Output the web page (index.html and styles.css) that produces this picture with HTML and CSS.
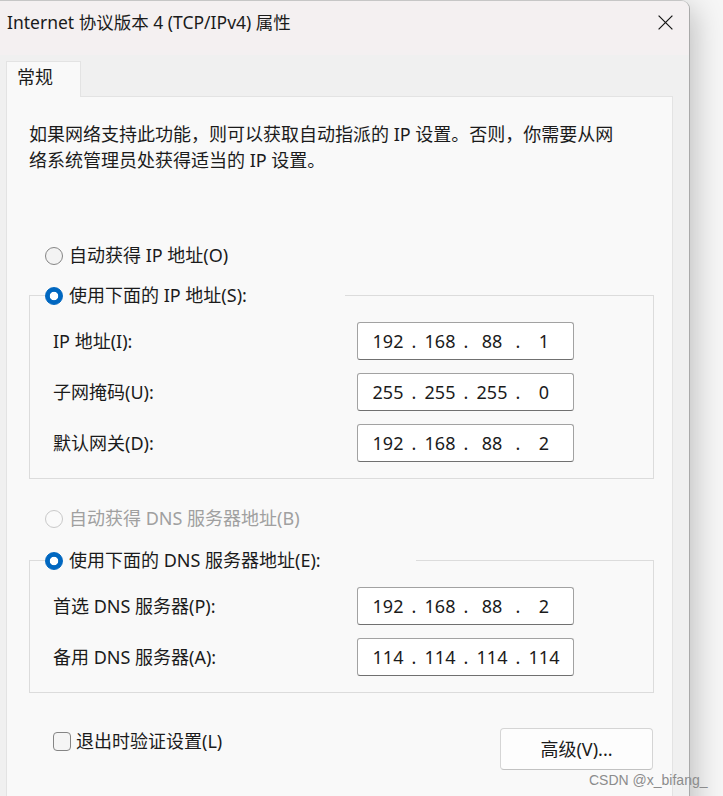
FILE: index.html
```html
<!DOCTYPE html>
<html lang="zh-CN">
<head>
<meta charset="utf-8">
<title>Internet 协议版本 4 (TCP/IPv4) 属性</title>
<link rel="stylesheet" href="styles.css">
</head>
<body>
<div class="window">
  <div class="titlebar">
    <span class="title">Internet 协议版本 4 (TCP/IPv4) 属性</span>
    <svg class="close" viewBox="0 0 15 15" aria-label="关闭"><path d="M0.6 0.6 L14.4 14.4 M14.4 0.6 L0.6 14.4" stroke="#1a1a1a" stroke-width="1.25" fill="none"/></svg>
  </div>
  <div class="content">
    <div class="tab">常规</div>
    <div class="panel">
      <p class="intro">如果网络支持此功能，则可以获取自动指派的 IP 设置。否则，你需要从网<br>络系统管理员处获得适当的 IP 设置。</p>

      <div class="radio-row r1"><span class="radio"></span><span>自动获得 IP 地址(O)</span></div>

      <fieldset class="group g1">
        <legend class="radio-row"><span class="radio checked"></span><span>使用下面的 IP 地址(S):</span></legend>
        <div class="fields">
          <label>IP 地址(I):</label>
          <div class="ip"><span class="oct">192</span><span class="dot">.</span><span class="oct">168</span><span class="dot">.</span><span class="oct">88</span><span class="dot">.</span><span class="oct">1</span></div>
          <label>子网掩码(U):</label>
          <div class="ip"><span class="oct">255</span><span class="dot">.</span><span class="oct">255</span><span class="dot">.</span><span class="oct">255</span><span class="dot">.</span><span class="oct">0</span></div>
          <label>默认网关(D):</label>
          <div class="ip"><span class="oct">192</span><span class="dot">.</span><span class="oct">168</span><span class="dot">.</span><span class="oct">88</span><span class="dot">.</span><span class="oct">2</span></div>
        </div>
      </fieldset>

      <div class="radio-row r3 disabled"><span class="radio off"></span><span>自动获得 DNS 服务器地址(B)</span></div>

      <fieldset class="group g2">
        <legend class="radio-row"><span class="radio checked"></span><span>使用下面的 DNS 服务器地址(E):</span></legend>
        <div class="fields">
          <label>首选 DNS 服务器(P):</label>
          <div class="ip"><span class="oct">192</span><span class="dot">.</span><span class="oct">168</span><span class="dot">.</span><span class="oct">88</span><span class="dot">.</span><span class="oct">2</span></div>
          <label>备用 DNS 服务器(A):</label>
          <div class="ip"><span class="oct">114</span><span class="dot">.</span><span class="oct">114</span><span class="dot">.</span><span class="oct">114</span><span class="dot">.</span><span class="oct">114</span></div>
        </div>
      </fieldset>

      <div class="bottom">
        <div class="check-row"><span class="checkbox"></span><span>退出时验证设置(L)</span></div>
        <button class="btn" type="button">高级(V)...</button>
      </div>
    </div>
  </div>
</div>
<div class="watermark">CSDN @x_bifang_</div>
</body>
</html>
```

FILE: styles.css
```css
* { box-sizing: border-box; }

html, body {
  margin: 0;
  height: 796px;
  overflow: hidden;
}

body {
  position: relative;
  background: #f6f6f6;
  font-family: "Noto Sans", "Noto Sans CJK SC", sans-serif;
  font-size: 18px;
  color: #1b1b1b;
}

.window {
  width: 690px;
  height: 830px;
  background: #f0f0f0;
  border-top: 1px solid #c6c6c6;
  border-right: 1px solid #a9a9a9;
  border-top-right-radius: 9px;
  box-shadow: 4px 8px 30px rgba(0, 0, 0, 0.24);
  overflow: hidden;
}

.titlebar {
  height: 54px;
  display: flex;
  justify-content: space-between;
  align-items: flex-start;
  padding: 8px 16px 0 7px;
  background: #f4f0f1;
}

.title {
  line-height: 27px;
  font-size: 17.5px;
  white-space: nowrap;
}

.close {
  width: 15px;
  height: 15px;
  margin-top: 6px;
}

.content {
  padding: 6px 0 0 6px;
}

.tab {
  position: relative;
  z-index: 1;
  width: 75px;
  height: 36px;
  margin-bottom: -1px;
  padding: 1px 0 0 10px;
  line-height: 28px;
  background: #f9f9f9;
  border: 1px solid #e3e3e3;
  border-bottom: none;
}

.panel {
  width: 667px;
  height: 740px;
  background: #f9f9f9;
  border: 1px solid #e3e3e3;
  padding: 24px 18px 0 22px;
}

.intro {
  margin: 0;
  line-height: 26px;
  white-space: nowrap;
}

.radio-row {
  display: flex;
  align-items: center;
  height: 27px;
  line-height: 27px;
  white-space: nowrap;
}

.radio {
  flex: none;
  width: 18px;
  height: 18px;
  margin-right: 6px;
  border-radius: 50%;
  border: 1px solid #858585;
  background: #f3f3f3;
}

.radio.checked {
  border-color: #0067c0;
  background: radial-gradient(circle, #ffffff 0 3.8px, #0067c0 4.6px);
}

.radio.off {
  border-color: #c9c9c9;
  background: #fafafa;
}

.disabled {
  color: #a0a0a0;
}

.r1 {
  margin: 69px 0 0 16px;
}

.r3 {
  margin: 26px 0 0 16px;
}

.group {
  width: 625px;
  margin: 13px 0 0;
  padding: 0 0 16px 15px;
  border: 1px solid #dcdcdc;
  min-inline-size: auto;
}

.g2 {
  margin-top: 15px;
}

.group legend {
  padding: 0;
  margin: 0;
}

.g1 legend {
  width: 300px;
}

.g2 legend {
  width: 371px;
}

.fields {
  display: grid;
  grid-template-columns: 304px 217px;
  row-gap: 13px;
  align-items: center;
  margin-top: 13px;
  padding-left: 8px;
}

.fields label {
  line-height: 27px;
  white-space: nowrap;
}

.ip {
  display: flex;
  height: 38px;
  padding-left: 12px;
  line-height: 36px;
  background: #ffffff;
  border: 1px solid #a2a2a2;
  border-bottom-color: #707070;
  border-radius: 3px;
}

.oct {
  width: 36px;
  text-align: center;
}

.dot {
  width: 16px;
  text-align: center;
}

.bottom {
  display: flex;
  justify-content: space-between;
  align-items: flex-start;
  margin-top: 35px;
  padding: 0 1px 0 24px;
}

.check-row {
  display: flex;
  align-items: center;
  height: 27px;
  line-height: 27px;
  white-space: nowrap;
}

.checkbox {
  flex: none;
  width: 18px;
  height: 19px;
  margin-right: 5px;
  border: 1px solid #858585;
  border-radius: 4px;
  background: #f5f5f5;
}

.btn {
  width: 153px;
  height: 42px;
  padding: 0;
  font: inherit;
  line-height: 40px;
  color: #1b1b1b;
  text-align: center;
  background: #fdfdfd;
  border: 1px solid #d5d5d5;
  border-bottom-color: #c2c2c2;
  border-radius: 4px;
}

.watermark {
  position: absolute;
  left: 589px;
  top: 771px;
  font-family: "Liberation Sans", Arial, sans-serif;
  font-size: 14px;
  line-height: 18px;
  color: #8c8c8c;
  white-space: nowrap;
}
```
